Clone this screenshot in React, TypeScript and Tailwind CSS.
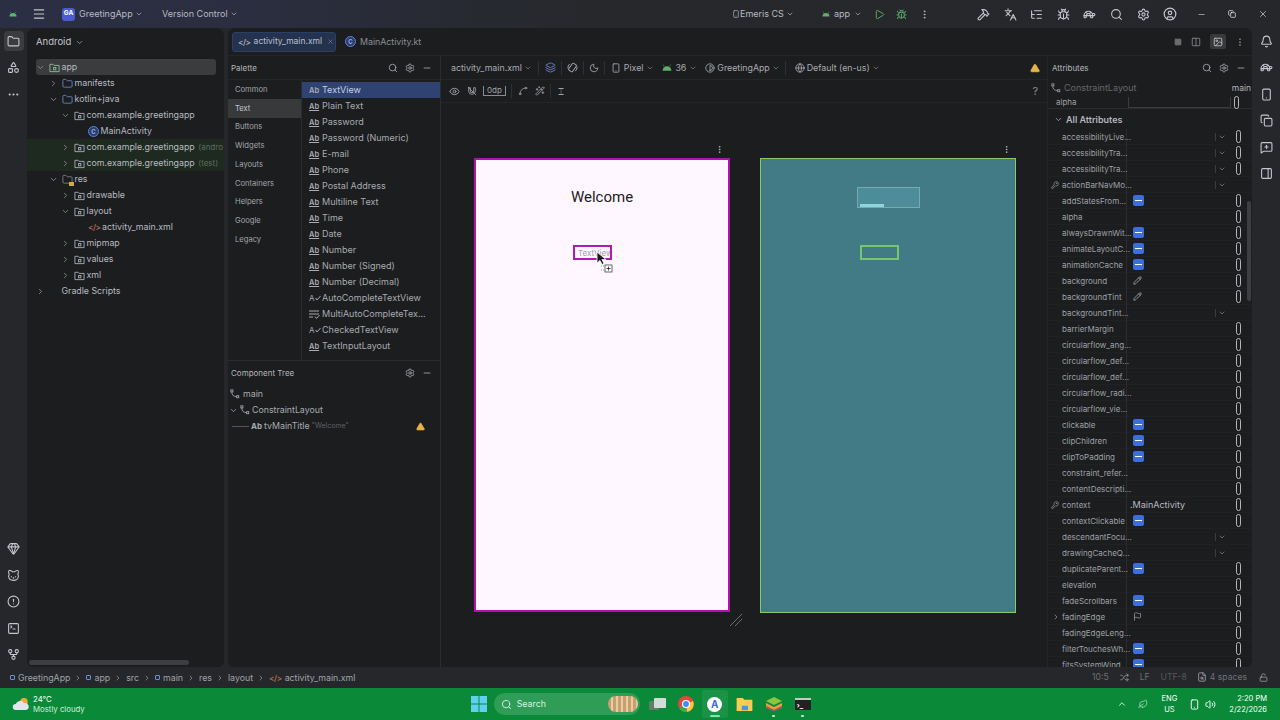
import {
  Bell, Bug, ChevronDown, ChevronRight, CircleAlert, CircleUser, Contrast, Copy, Ellipsis, EllipsisVertical, Eye,
  Flag, Folder, Gem, GitFork, Globe, Image, KeyRound, Languages, Layers, Leaf, ListTree, LockOpen, Menu, MessageSquarePlus, Minus, Moon, PanelRight, Pencil,
  Play, Search, Settings, Shuffle, Smartphone, SquareTerminal, FileSearch, TriangleAlert, Turtle, Volume2, WandSparkles, X, Hammer, Shapes,
  Columns2, Square, Cat, Spline,
} from "lucide-react";

const font = "font-['Inter','Liberation_Sans',sans-serif]";

function AndroidHead({ className = "" }: { className?: string }) {
  return (
    <svg viewBox="0 0 16 10" className={className}>
      <path d="M1 10a7 7 0 0 1 14 0z" fill="currentColor" />
      <path d="M3.5 3 2 .5M12.5 3 14 .5" stroke="currentColor" strokeWidth="1" />
    </svg>
  );
}

function ConstraintIcon({ className = "" }: { className?: string }) {
  return (
    <svg viewBox="0 0 12 12" className={`h-[10px] w-[10px] shrink-0 fill-none stroke-current ${className}`}>
      <rect x="1" y="1" width="2.500" height="2.500" />
      <rect x="8" y="8" width="2.500" height="2.500" />
      <path d="M2.200 3.500c0 4 2 5.500 5.800 5.700" />
    </svg>
  );
}

function ModuleFolder({ color = "#a9adb5" }: { color?: string }) {
  return (
    <svg viewBox="0 0 12 12" className="h-[11px] w-[11px] shrink-0 fill-none" stroke={color} strokeWidth="1">
      <path d="M1 2.500h3.500l1 1.200H11v6.800H1z" />
      <rect x="5" y="6" width="2.500" height="2.500" />
    </svg>
  );
}

function Klass() {
  return (
    <span className="flex h-[11px] w-[11px] shrink-0 items-center justify-center rounded-full border border-[#5b82e0] bg-[#2d3c66] text-[6px] font-bold text-[#8fb0f5]">
      C
    </span>
  );
}

function XmlTag({ className = "text-[#b06a50]" }: { className?: string }) {
  return <span className={`shrink-0 text-[8px] font-semibold tracking-tighter ${className}`}>{"</>"}</span>;
}

type TreeRow = {
  label: string;
  extra?: string;
  pad: string;
  arrow?: "open" | "closed";
  icon: "module" | "blue" | "pkg" | "class" | "res" | "xml" | "gradle";
  tint?: boolean;
  active?: boolean;
};

const tree: TreeRow[] = [
  { label: "app", pad: "pl-[5px]", arrow: "open", icon: "module", active: true },
  { label: "manifests", pad: "pl-[18px]", arrow: "closed", icon: "blue" },
  { label: "kotlin+java", pad: "pl-[18px]", arrow: "open", icon: "blue" },
  { label: "com.example.greetingapp", pad: "pl-[30px]", arrow: "open", icon: "pkg" },
  { label: "MainActivity", pad: "pl-[44px]", icon: "class" },
  { label: "com.example.greetingapp", extra: "(andro", pad: "pl-[30px]", arrow: "closed", icon: "pkg", tint: true },
  { label: "com.example.greetingapp", extra: "(test)", pad: "pl-[30px]", arrow: "closed", icon: "pkg", tint: true },
  { label: "res", pad: "pl-[18px]", arrow: "open", icon: "res" },
  { label: "drawable", pad: "pl-[30px]", arrow: "closed", icon: "pkg" },
  { label: "layout", pad: "pl-[30px]", arrow: "open", icon: "pkg" },
  { label: "activity_main.xml", pad: "pl-[44px]", icon: "xml" },
  { label: "mipmap", pad: "pl-[30px]", arrow: "closed", icon: "pkg" },
  { label: "values", pad: "pl-[30px]", arrow: "closed", icon: "pkg" },
  { label: "xml", pad: "pl-[30px]", arrow: "closed", icon: "pkg" },
  { label: "Gradle Scripts", pad: "pl-[5px]", arrow: "closed", icon: "gradle" },
];

function TreeIcon({ icon }: { icon: TreeRow["icon"] }) {
  if (icon === "class") return <Klass />;
  if (icon === "xml") return <XmlTag />;
  if (icon === "blue") return <Folder size={11} strokeWidth={1.5} className="shrink-0 text-[#7fa3ee]" />;
  if (icon === "module") return <ModuleFolder color="#8fb89a" />;
  if (icon === "gradle") return <span className="w-[11px] shrink-0" />;
  if (icon === "res")
    return (
      <span className="relative shrink-0">
        <Folder size={11} strokeWidth={1.3} className="text-[#a9adb5]" />
        <span className="absolute -bottom-[1px] -right-[1px] h-[4px] w-[5px] bg-[#d9a83a]" />
      </span>
    );
  return <ModuleFolder />;
}

function ProjectPanel() {
  return (
    <div className="flex w-[197px] shrink-0 flex-col overflow-hidden rounded-t-[8px] rounded-b-[6px] bg-[#1b1d1f]">
      <div className="flex h-[31px] shrink-0 items-center gap-1 pb-[3px] pl-[9px] text-[9.5px] text-[#c4c6cc]">
        Android <ChevronDown size={9} className="text-[#a0a2a8]" />
      </div>
      <div className="flex-1">
        {tree.map((r, i) => (
          <div key={i} className={`flex h-4 items-center ${r.tint ? "bg-[#1e2a20]" : ""}`}>
            <div className={`flex h-4 w-full items-center ${r.pad} ${r.active ? "ml-[9px] mr-2 rounded-[3px] bg-[#3a3c3e] !pl-0" : ""}`}>
              <span className={`flex w-[17px] shrink-0 items-center justify-center text-[#9a9ca2] ${r.active ? "-ml-[4px]" : ""}`}>
                {r.arrow === "open" && <ChevronDown size={9} />}
                {r.arrow === "closed" && <ChevronRight size={9} />}
              </span>
              <div className="flex items-center gap-[1.500px] whitespace-nowrap text-[8.8px] text-[#b8bac0]">
                <TreeIcon icon={r.icon} />
                <span>{r.label}</span>
                {r.extra && <span className="ml-[2px] text-[8px] text-[#5d6a5f]">{r.extra}</span>}
              </div>
            </div>
          </div>
        ))}
      </div>
      <div className="mb-[2px] ml-[2px] h-[5px] w-[160px] shrink-0 rounded-full bg-[#3c3e41]" />
    </div>
  );
}

function Ab({ plain = false }: { plain?: boolean }) {
  return (
    <span className={`w-[12px] shrink-0 text-[7.500px] font-semibold leading-[9px] text-[#a9abb1] ${plain ? "" : "underline"}`}>
      Ab
    </span>
  );
}

function AutoIcon() {
  return (
    <span className="flex w-[12px] shrink-0 items-center text-[8px] leading-none text-[#a9abb1]">
      A
      <svg viewBox="0 0 6 6" className="h-[6px] w-[6px] fill-none stroke-current">
        <path d="M.500 3 2 5 5.500 1" />
      </svg>
    </span>
  );
}

function MultiIcon() {
  return (
    <svg viewBox="0 0 11 9" className="mr-[1px] h-[9px] w-[11px] shrink-0 fill-none stroke-[#a9abb1]">
      <path d="M0 1h10M0 4h10M0 7h4M6 6.500 7.500 8.500 10.500 5" />
    </svg>
  );
}

const paletteItems = [
  "Plain Text", "Password", "Password (Numeric)", "E-mail", "Phone", "Postal Address", "Multiline Text", "Time", "Date",
  "Number", "Number (Signed)", "Number (Decimal)", "AutoCompleteTextView", "MultiAutoCompleteTex...", "CheckedTextView", "TextInputLayout",
];
const categories = ["Common", "Text", "Buttons", "Widgets", "Layouts", "Containers", "Helpers", "Google", "Legacy"];

function PalettePanel() {
  return (
    <div className="flex w-[213px] shrink-0 flex-col border-r border-[#2a2c2f]">
      <div className="flex h-[24px] shrink-0 items-center justify-between border-b border-[#232527] pl-[3px] pr-[8px] text-[8px] text-[#b4b6bc]">
        Palette
        <div className="flex items-center gap-[7px] text-[#a9abb1]">
          <Search size={10} />
          <Settings size={10} />
          <Minus size={10} />
        </div>
      </div>
      <div className="flex h-[281px] shrink-0 border-b border-[#2a2c2f]">
        <div className="w-[74px] shrink-0 border-r border-[#2a2c2f]">
          {categories.map((c) => (
            <div key={c} className={`flex h-[18.800px] items-center pl-[7px] text-[7.600px] text-[#a4a6ac] ${c === "Text" ? "bg-[#37393b] text-[#c4c6cc]" : ""}`}>
              {c}
            </div>
          ))}
        </div>
        <div className="flex-1 pt-[2px] text-[9px] text-[#a9abb1]">
          <div className="flex h-4 items-center gap-[1px] bg-[#2e4371] pl-[7px] text-[#c6cfe4]">
            <Ab plain /> TextView
          </div>
          {paletteItems.map((p) => (
            <div key={p} className="flex h-4 items-center gap-[1px] whitespace-nowrap pl-[7px]">
              {p.startsWith("Auto") || p.startsWith("Checked") ? <AutoIcon /> : p.startsWith("MultiAuto") ? <MultiIcon /> : <Ab />}
              {p}
            </div>
          ))}
        </div>
      </div>
      <div className="flex h-[24px] shrink-0 items-center justify-between pl-[3px] pr-[8px] text-[8px] text-[#b4b6bc]">
        Component Tree
        <div className="flex items-center gap-[7px] text-[#a9abb1]">
          <Settings size={10} />
          <Minus size={10} />
        </div>
      </div>
      <div className="pt-[1px] text-[8.800px] text-[#a9abb1]">
        <div className="flex h-4 items-center gap-[3px] pl-[2px]">
          <ConstraintIcon /> main
        </div>
        <div className="flex h-4 items-center gap-[2px] pl-[1px]">
          <ChevronDown size={9} />
          <ConstraintIcon /> ConstraintLayout
        </div>
        <div className="flex h-4 items-center pl-[4px] pr-[15px]">
          <span className="mr-[2px] h-px w-[17px] bg-[#55575a]" />
          <span className="mr-[2px] text-[8px] font-bold">Ab</span>
          <span>tvMainTitle</span>
          <span className="ml-[2px] text-[7px] text-[#5f6165]">"Welcome"</span>
          <TriangleAlert size={9} className="ml-auto fill-[#e8b24a] text-[#e8b24a]" />
        </div>
      </div>
    </div>
  );
}

function Chev() {
  return <ChevronDown size={8} className="text-[#8a8c92]" />;
}

function Sep({ className = "mx-[5px]" }: { className?: string }) {
  return <span className={`h-[14px] w-px bg-[#2e3033] ${className}`} />;
}

function RotateIcon() {
  return (
    <svg viewBox="0 0 12 12" className="h-[11px] w-[11px] fill-none stroke-current">
      <rect x="3.500" y="1.500" width="5" height="9" rx="1" transform="rotate(35 6 6)" />
      <path d="M1 7a5.500 5.500 0 0 1 2-5M11 5a5.500 5.500 0 0 1-2 5" />
    </svg>
  );
}

function MagnetOff() {
  return (
    <svg viewBox="0 0 12 12" className="ml-[7px] h-[10px] w-[10px] fill-none stroke-current">
      <path d="M2 2v4a4 4 0 0 0 8 0V2H8v4a2 2 0 0 1-4 0V2z" />
      <path d="M1 1l10 10" />
    </svg>
  );
}

function DesignToolbars() {
  return (
    <>
      <div className="flex h-[24px] shrink-0 items-center border-b border-[#232527] pl-[10px] pr-[7px] text-[8.800px] text-[#a9abb1]">
        <span>activity_main.xml</span>
        <span className="ml-[2px]"><Chev /></span>
        <Sep className="mx-[6px]" />
        <Layers size={11} className="text-[#6c82cf]" />
        <Sep />
        <RotateIcon />
        <Sep />
        <Moon size={10} />
        <Sep />
        <div className="ml-[1px] flex items-center gap-[3px]">
          <Smartphone size={10} />
          <span>Pixel</span>
          <Chev />
        </div>
        <div className="ml-[8px] flex items-center gap-[3px]">
          <AndroidHead className="h-[7px] w-[10px] text-[#5fae6d]" />
          <span>36</span>
          <Chev />
        </div>
        <div className="ml-[8px] flex items-center gap-[2px]">
          <Contrast size={10} />
          <span>GreetingApp</span>
          <Chev />
        </div>
        <Sep />
        <div className="ml-[4px] flex items-center gap-[2px]">
          <Globe size={10} />
          <span>Default (en-us)</span>
          <Chev />
        </div>
        <TriangleAlert size={10} className="ml-auto fill-[#e8b24a] text-[#e8b24a]" />
      </div>
      <div className="flex h-[23px] shrink-0 items-center border-b border-[#232527] pl-[8px] pr-[9px] text-[#a0a2a8]">
        <Eye size={11} />
        <MagnetOff />
        <span className="ml-[6px] flex h-[10px] items-end border-x border-b border-[#8a8c92] px-[3px] text-[8px] leading-[10px]">0dp</span>
        <Sep />
        <Spline size={10} className="ml-[1px]" />
        <WandSparkles size={10} className="ml-[7px]" />
        <Sep />
        <span className="ml-[2px] text-[10px] leading-none">⌶</span>
        <span className="ml-auto text-[11px] text-[#8a8c92]">?</span>
      </div>
    </>
  );
}

function Surfaces() {
  return (
    <div className="relative flex flex-1 gap-[30px] bg-[#1b1d1f] pl-[33px] pt-[42px]">
      <div className="w-[256px]">
        <div className="flex h-[13px] justify-end pr-[6px]">
          <EllipsisVertical size={9} className="text-[#c4c6cc]" />
        </div>
        <div className="relative h-[454px] border-2 border-[#ad14ad] bg-[#fef7ff]">
          <div className="pt-[26px] text-center text-[15px] text-[#1d1b20] font-['Roboto',sans-serif]">Welcome</div>
          <div className="absolute left-[97px] top-[85px] flex h-[15px] w-[39px] items-center overflow-hidden border-[2px] border-[#b01ab5] pl-[3px] text-[8px] text-[#a3a0a6]">
            TextView
          </div>
          <svg viewBox="0 0 22 24" className="absolute left-[120px] top-[91px] h-[24px] w-[22px]">
            <path d="M1 1v11l3-2.500 2 4 2-1-2-4h4z" fill="#1d1b20" stroke="#fff" strokeWidth=".8" />
            <path d="M5 15h4M5 19h4" stroke="#9a9a9a" strokeWidth="1" strokeDasharray="1 1" />
            <rect x="9" y="14" width="7" height="7" fill="#fff" stroke="#444" strokeWidth=".8" />
            <path d="M12.500 15.500v4M10.500 17.500h4" stroke="#222" strokeWidth=".8" />
          </svg>
        </div>
      </div>
      <div className="w-[256px]">
        <div className="flex h-[13px] justify-end pr-[5px]">
          <EllipsisVertical size={9} className="text-[#c4c6cc]" />
        </div>
        <div className="relative h-[455px] border-[1.500px] border-[#86c96b] bg-[#427b85]">
          <div className="absolute left-[96px] top-[28px] h-[21px] w-[63px] border border-[#78aab3] bg-[#4d8d99]">
            <div className="absolute bottom-0 left-[2px] h-[3px] w-[24px] bg-[#8fd3dc]" />
          </div>
          <div className="absolute left-[99px] top-[86px] h-[15px] w-[39px] border-[2px] border-[#74c76f]" />
        </div>
      </div>
      <svg viewBox="0 0 14 14" className="absolute bottom-[40px] left-[288px] h-[14px] w-[14px] stroke-[#6a6c70]">
        <path d="M1 13 13 1M6 13l7-7" strokeWidth="1" />
      </svg>
    </div>
  );
}

type AttrKind = "blue" | "chev" | "chevpill" | "pen" | "none" | "flag" | "ctx";
const attrs: [string, AttrKind, boolean?][] = [
  ["accessibilityLive...", "chevpill"], ["accessibilityTra...", "chevpill"], ["accessibilityTra...", "chevpill"], ["actionBarNavMo...", "chev", true],
  ["addStatesFrom...", "blue"], ["alpha", "none"], ["alwaysDrawnWit...", "blue"], ["animateLayoutC...", "blue"], ["animationCache", "blue"],
  ["background", "pen"], ["backgroundTint", "pen"], ["backgroundTint...", "chev"], ["barrierMargin", "none"], ["circularflow_ang...", "none"],
  ["circularflow_def...", "none"], ["circularflow_def...", "none"], ["circularflow_radi...", "none"], ["circularflow_vie...", "none"],
  ["clickable", "blue"], ["clipChildren", "blue"], ["clipToPadding", "blue"], ["constraint_refer...", "none"], ["contentDescripti...", "none"],
  ["context", "ctx", true], ["contextClickable", "blue"], ["descendantFocu...", "chev"], ["drawingCacheQ...", "chev"], ["duplicateParent...", "blue"],
  ["elevation", "none"], ["fadeScrollbars", "blue"], ["fadingEdge", "flag"], ["fadingEdgeLeng...", "none"], ["filterTouchesWh...", "blue"], ["fitsSystemWind", "blue"],
];

function Pill() {
  return <span className="block h-[13px] w-[5px] shrink-0 rounded-full border border-[#b4b6bc]" />;
}

function AttrRow({ name, kind, key_ }: { name: string; kind: AttrKind; key_?: boolean }) {
  const hasChev = kind === "chev" || kind === "chevpill";
  return (
    <div className="flex h-4 shrink-0 items-center border-b border-[#1f2123] text-[8px] text-[#9fa1a7]">
      <div className="relative flex h-4 w-[79px] shrink-0 items-center whitespace-nowrap border-r border-[#2a2c2f] pl-[14px]">
        {key_ && <KeyRound size={8} className="absolute left-[3px] text-[#9a9ca2]" />}
        {kind === "flag" && <ChevronRight size={8} className="absolute left-[4px]" />}
        {name}
      </div>
      <div className="flex flex-1 items-center pl-[6px]">
        {kind === "blue" && (
          <span className="flex h-[11px] w-[11px] items-center justify-center rounded-[2px] bg-[#3d6fdc]">
            <span className="h-[1.500px] w-[7px] bg-white" />
          </span>
        )}
        {kind === "pen" && <Pencil size={9} className="text-[#b4b6bc]" />}
        {kind === "flag" && <Flag size={9} className="text-[#9a9ca2]" />}
        {kind === "ctx" && <span className="-ml-[3px] text-[9px] text-[#b8bac0]">.MainActivity</span>}
      </div>
      {hasChev && (
        <span className="mr-[10px] flex items-center gap-[2px]">
          <span className="h-[8px] w-px bg-[#3a3c3e]" />
          <Chev />
        </span>
      )}
      <span className="mr-[11px] w-[5px] shrink-0">{kind !== "chev" && <Pill />}</span>
    </div>
  );
}

function AttributesPanel() {
  return (
    <div className="flex w-[205px] shrink-0 flex-col overflow-hidden border-l border-[#232527]">
      <div className="flex h-[24px] shrink-0 items-center justify-between pl-[4px] pr-[6px] text-[8px] text-[#b4b6bc]">
        Attributes
        <div className="flex items-center gap-[7px] text-[#a9abb1]">
          <Search size={10} />
          <Settings size={10} />
          <Minus size={10} />
        </div>
      </div>
      <div className="flex h-[16px] shrink-0 items-center gap-[3px] pl-[3px] text-[9px] text-[#66686c]">
        <ConstraintIcon className="text-[#9a9ca2]" /> ConstraintLayout
        <span className="ml-auto pr-[1px] text-[8.500px] text-[#b4b6bc]">main</span>
      </div>
      <div className="flex h-[13px] shrink-0 items-center border-b border-[#2a2c2f] text-[8px] text-[#9fa1a7]">
        <span className="w-[80px] pl-[8px]">alpha</span>
        <span className="h-[11px] w-[103px] border-x border-b border-[#3a3c3e]" />
        <span className="ml-[3px]"><Pill /></span>
      </div>
      <div className="flex h-[20px] shrink-0 items-center gap-[3px] pl-[6px] pt-[1px] text-[9px] font-semibold text-[#b4b6bc]">
        <ChevronDown size={9} /> All Attributes
      </div>
      <div className="relative flex min-h-0 flex-1 flex-col overflow-hidden">
        {attrs.map((a, i) => (
          <AttrRow key={i} name={a[0]} kind={a[1]} key_={a[2]} />
        ))}
        <span className="absolute right-[1px] top-[72px] h-[100px] w-[4px] rounded-full bg-[#3c3e41]" />
      </div>
    </div>
  );
}

function Editor() {
  return (
    <div className="flex min-w-0 flex-1 flex-col overflow-hidden rounded-t-[8px] rounded-b-[6px] bg-[#1b1d1f]">
      <div className="flex h-[28px] shrink-0 items-center border-b border-[#232527] pl-[4px] pr-[7px] text-[8.500px]">
        <div className="flex h-[20px] w-[104px] items-center gap-[3px] rounded-[3px] border border-[#2a3f66] bg-[#24324d] pl-[5px] text-[#b8c0d0]">
          <XmlTag className="text-[#a9adb5]" />
          activity_main.xml
          <X size={7} className="ml-[2px] shrink-0 text-[#7d8596]" />
        </div>
        <div className="ml-[9px] flex items-center gap-[4px] text-[8.800px] text-[#8d8f95]">
          <Klass />
          MainActivity.kt
        </div>
        <div className="ml-auto flex items-center gap-[9px] text-[#8a8c92]">
          <Square size={8} className="fill-[#6a6c70] text-[#6a6c70]" />
          <Columns2 size={10} />
          <span className="flex h-[15px] w-[16px] items-center justify-center rounded-[2px] bg-[#37393b] text-[#c4c6cc]">
            <Image size={10} />
          </span>
          <Ellipsis size={10} className="rotate-90" />
        </div>
      </div>
      <div className="flex min-h-0 flex-1">
        <PalettePanel />
        <div className="flex min-w-0 flex-1 flex-col">
          <DesignToolbars />
          <Surfaces />
        </div>
        <AttributesPanel />
      </div>
    </div>
  );
}

function TopBar() {
  return (
    <div className="flex h-7 shrink-0 items-center bg-[linear-gradient(90deg,#2b2f44_0%,#2b2e40_18%,#26282c_45%,#25272a_100%)] text-[9px] text-[#b8bac0]">
      <AndroidHead className="ml-[9px] h-[6px] w-[8px] shrink-0 text-[#57b96a]" />
      <Menu size={14} className="ml-[15px] shrink-0 text-[#c4c6cc]" />
      <span className="ml-[16px] flex h-[13px] w-[13px] shrink-0 items-center justify-center rounded-[3px] bg-[#4a5bd0] text-[6.500px] font-bold text-white">GA</span>
      <span className="ml-[4px] w-[53px] shrink-0 whitespace-nowrap">GreetingApp</span>
      <ChevronDown size={8} className="ml-[3px] shrink-0" />
      <span className="ml-[19px] w-[66px] shrink-0 whitespace-nowrap">Version Control</span>
      <ChevronDown size={8} className="ml-[2px] shrink-0" />
      <div className="ml-[494px] flex w-[64px] shrink-0 items-center whitespace-nowrap">
        <Smartphone size={8} className="shrink-0" />
        Emeris CS
        <ChevronDown size={8} className="ml-[2px] shrink-0" />
      </div>
      <div className="ml-[26px] flex w-[40px] shrink-0 items-center gap-[4px]">
        <AndroidHead className="h-[6px] w-[8px] text-[#5fae6d]" />
        app
        <ChevronDown size={8} />
      </div>
      <Play size={11} className="ml-[12px] shrink-0 text-[#5fae6d]" />
      <Bug size={11} className="ml-[11px] shrink-0 text-[#5fae6d]" />
      <EllipsisVertical size={11} className="ml-[12px] shrink-0" />
      <div className="ml-[47px] flex shrink-0 items-center gap-[13.600px] text-[#c4c6cc]">
        <Hammer size={13} />
        <Languages size={13} />
        <ListTree size={13} />
        <Bug size={13} />
        <Turtle size={13} />
        <Search size={13} />
        <Settings size={13} />
        <CircleUser size={14} />
      </div>
      <Minus size={9} className="ml-[19.500px] shrink-0" />
      <Copy size={8} className="ml-[22.500px] shrink-0 text-white" />
      <X size={10} className="ml-[22px] shrink-0" />
    </div>
  );
}

function LeftRail() {
  return (
    <div className="flex w-[27px] shrink-0 flex-col items-center pb-[6px] pt-[3px] text-[#c4c6cc]">
      <span className="flex h-[20px] w-[20px] items-center justify-center rounded-[4px] bg-[#3a3c3e]">
        <Folder size={13} />
      </span>
      <Shapes size={13} className="mt-[10px]" />
      <Ellipsis size={13} className="mt-[13.500px]" />
      <div className="mt-auto flex flex-col items-center gap-[13.500px]">
        <Gem size={13} />
        <Cat size={13} />
        <CircleAlert size={13} />
        <SquareTerminal size={13} />
        <GitFork size={13} />
      </div>
    </div>
  );
}

function RightRail() {
  return (
    <div className="flex w-[28px] shrink-0 flex-col items-center gap-[13.600px] pt-[6.500px] text-[#c4c6cc]">
      <Bell size={13} />
      <Turtle size={13} />
      <Smartphone size={13} />
      <Copy size={13} />
      <MessageSquarePlus size={13} />
      <PanelRight size={13} />
    </div>
  );
}

function Crumb({ children, square = false }: { children: string; square?: boolean }) {
  return (
    <span className="flex items-center gap-[3px]">
      {square && <span className="h-[5px] w-[5px] rounded-[1px] border border-[#6c8fd6]" />}
      {children}
    </span>
  );
}

function Breadcrumbs() {
  return (
    <div className="flex h-[21px] shrink-0 items-center pl-[10px] pr-[12px] text-[8.800px] text-[#a0a2a8]">
      <Crumb square>GreetingApp</Crumb>
      <ChevronRight size={8} className="mx-[4px]" />
      <Crumb square>app</Crumb>
      <ChevronRight size={8} className="mx-[4px]" />
      <Crumb>src</Crumb>
      <ChevronRight size={8} className="mx-[4px]" />
      <Crumb square>main</Crumb>
      <ChevronRight size={8} className="mx-[4px]" />
      <Crumb>res</Crumb>
      <ChevronRight size={8} className="mx-[4px]" />
      <Crumb>layout</Crumb>
      <ChevronRight size={8} className="mx-[4px]" />
      <span className="flex items-center gap-[3px]">
        <XmlTag /> activity_main.xml
      </span>
      <div className="ml-auto flex items-center text-[8.600px] text-[#6f7176]">
        <span>10:5</span>
        <Shuffle size={9} className="ml-[11px] text-[#a0a2a8]" />
        <span className="ml-[11px]">LF</span>
        <span className="ml-[11px] text-[#55575b]">UTF-8</span>
        <FileSearch size={10} className="ml-[10px] text-[#a0a2a8]" />
        <span className="ml-[3px]">4 spaces</span>
        <LockOpen size={9} className="ml-[12px] text-[#a0a2a8]" />
      </div>
    </div>
  );
}

function Taskbar() {
  return (
    <div className="flex h-8 shrink-0 items-center bg-[#0a8a38] text-white">
      <svg viewBox="0 0 24 18" className="ml-[12px] h-[16px] w-[18px]">
        <circle cx="16" cy="6" r="5" fill="#f0a93c" />
        <path d="M5 17a4 4 0 0 1 0-8 6 6 0 0 1 11-1 4.500 4.500 0 0 1 3 9z" fill="#dfe7ee" />
      </svg>
      <div className="ml-[3px] text-[7.800px] leading-[10.500px]">
        <div>24°C</div>
        <div className="text-[#cfeeda]">Mostly cloudy</div>
      </div>
      <svg viewBox="0 0 16 16" className="ml-[386px] h-[16px] w-[16px] fill-[#5fd0f0]">
        <rect x="0" y="0" width="7.500" height="7.500" />
        <rect x="8.500" y="0" width="7.500" height="7.500" />
        <rect x="0" y="8.500" width="7.500" height="7.500" />
        <rect x="8.500" y="8.500" width="7.500" height="7.500" />
      </svg>
      <div className="ml-[7px] flex h-[22px] w-[146px] items-center rounded-full bg-[#2f9c57] pl-[7px] text-[8.800px] text-[#d9f2e2]">
        <Search size={11} />
        <span className="ml-[5px]">Search</span>
        <span className="ml-auto mr-[2px] h-[16px] w-[30px] rounded-[8px] bg-[repeating-linear-gradient(90deg,#c9a06d_0_3px,#e6cda5_3px_5px)]" />
      </div>
      <div className="relative ml-[9px] h-[12px] w-[17px]">
        <span className="absolute bottom-0 left-0 h-[9px] w-[10px] rounded-[1px] bg-[#5f7f6b]" />
        <span className="absolute right-0 top-0 h-[10px] w-[12px] rounded-[1px] bg-[#d5dbd8]" />
      </div>
      <svg viewBox="0 0 16 16" className="ml-[12px] h-[16px] w-[16px]">
        <circle cx="8" cy="8" r="8" fill="#e0483c" />
        <path d="M8 8 1 12a8 8 0 0 0 8 4z" fill="#3fa652" />
        <path d="M8 8l7-3a8 8 0 0 1-6 11z" fill="#f5c93d" />
        <circle cx="8" cy="8" r="3.500" fill="#4a8af0" stroke="#fff" strokeWidth="1.200" />
      </svg>
      <div className="relative ml-[8px] flex h-[28px] w-[26px] items-center justify-center rounded-[3px] bg-[#1c9248]">
        <span className="flex h-[15px] w-[15px] items-center justify-center rounded-full bg-white text-[10px] font-bold leading-none text-[#3b6fd0]">A</span>
        <span className="absolute bottom-[1px] h-[2px] w-[10px] rounded-full bg-[#7de8a8]" />
      </div>
      <svg viewBox="0 0 18 16" className="ml-[8px] h-[14px] w-[17px]">
        <path d="M0 1h7l2 2h9v13H0z" fill="#f5cf4f" />
        <rect x="6" y="10" width="7" height="5" fill="#3d9be0" />
      </svg>
      <div className="relative ml-[13px] flex h-[28px] w-[16px] items-center justify-center">
        <svg viewBox="0 0 16 14" className="h-[14px] w-[16px]">
          <path d="M8 0l8 4-8 4-8-4z" fill="#8cc63f" />
          <path d="M0 6l8 4 8-4v3l-8 4-8-4z" fill="#e6a23c" />
          <path d="M0 9l8 4 8-4v2l-8 3-8-3z" fill="#d24a68" />
        </svg>
        <span className="absolute bottom-[1px] h-[2px] w-[3px] rounded-full bg-[#cfeeda]" />
      </div>
      <div className="relative ml-[13px] flex h-[28px] w-[16px] items-center justify-center">
        <span className="flex h-[12px] w-[16px] items-center border-t-2 border-[#c8c8c8] bg-[#222] pl-[2px] text-[7px] font-bold leading-none">›_</span>
        <span className="absolute bottom-[1px] h-[2px] w-[3px] rounded-full bg-[#cfeeda]" />
      </div>
      <div className="ml-auto flex items-center pr-[13px] text-[7.500px] leading-[11px]">
        <ChevronDown size={10} className="rotate-180" />
        <Leaf size={10} className="ml-[11px] text-[#a5d8b8]" />
        <div className="ml-[14px] text-center">
          <div>ENG</div>
          <div>US</div>
        </div>
        <Smartphone size={11} className="ml-[12px]" />
        <Volume2 size={11} className="ml-[5px]" />
        <div className="ml-[13px] text-right">
          <div>2:20 PM</div>
          <div>2/22/2026</div>
        </div>
      </div>
    </div>
  );
}

export default function App() {
  return (
    <div className={`flex h-[720px] w-[1280px] flex-col overflow-hidden bg-[#25272a] ${font}`}>
      <TopBar />
      <div className="flex min-h-0 flex-1">
        <LeftRail />
        <ProjectPanel />
        <div className="w-[4px] shrink-0" />
        <Editor />
        <RightRail />
      </div>
      <Breadcrumbs />
      <Taskbar />
    </div>
  );
}
